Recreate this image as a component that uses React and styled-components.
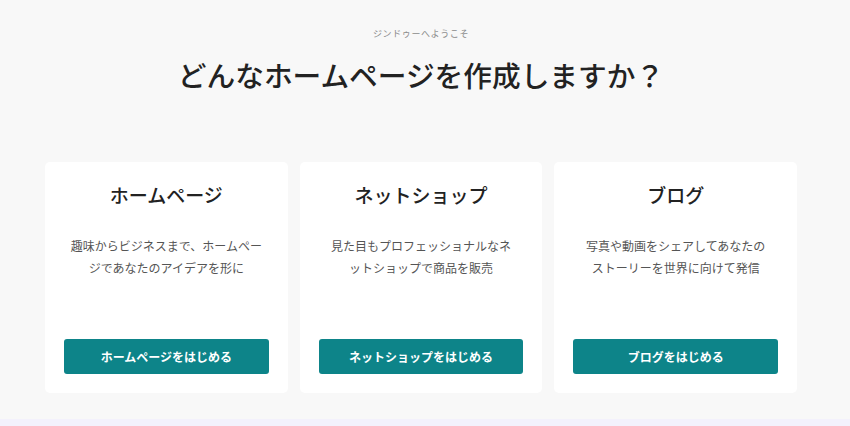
import React from "react";
import styled, { createGlobalStyle } from "styled-components";

const GlobalStyle = createGlobalStyle`
    html, body {
        margin: 0;
        padding: 0;
        background-color: #f8f8f8;
    }
    body {
        font-family: "Noto Sans CJK JP", "Noto Sans", sans-serif;
        color: #222;
    }
`;

const Page = styled.div`
    height: 426px;
    box-sizing: border-box;
    display: flex;
    flex-direction: column;
    align-items: center;
    padding: 26px 53px 0 45px;
    border-bottom: 7px solid #f3f1fc;
`;

const Welcome = styled.p`
    margin: 0;
    font-size: 9px;
    line-height: 16px;
    color: #8c8c8c;
    letter-spacing: 0.6px;
`;

const Title = styled.h1`
    margin: 13px 0 0;
    font-size: 28.7px;
    line-height: 40px;
    font-weight: 500;
    color: #222;
`;

const Cards = styled.div`
    margin-top: 67px;
    width: 100%;
    display: grid;
    grid-template-columns: repeat(3, 1fr);
    gap: 12px;
`;

const Card = styled.div`
    background-color: #fff;
    border-radius: 5px;
    height: 231px;
    box-sizing: border-box;
    padding: 19px;
    display: flex;
    flex-direction: column;
    align-items: center;
`;

const CardTitle = styled.h2`
    margin: 0;
    font-size: 19px;
    line-height: 28px;
    font-weight: 500;
    color: #222;
`;

const Description = styled.p`
    margin: 26px 0 0;
    font-size: 12px;
    line-height: 22px;
    color: #555;
    text-align: center;
    flex: 1;
`;

const Button = styled.button`
    width: 100%;
    height: 35px;
    border: none;
    border-radius: 3px;
    background-color: #0d8489;
    color: #fff;
    font-family: inherit;
    font-size: 12px;
    font-weight: 700;
    cursor: pointer;
`;

const plans = [
    {
        title: "ホームページ",
        lines: ["趣味からビジネスまで、ホームペー", "ジであなたのアイデアを形に"],
        action: "ホームページをはじめる",
    },
    {
        title: "ネットショップ",
        lines: ["見た目もプロフェッショナルなネ", "ットショップで商品を販売"],
        action: "ネットショップをはじめる",
    },
    {
        title: "ブログ",
        lines: ["写真や動画をシェアしてあなたの", "ストーリーを世界に向けて発信"],
        action: "ブログをはじめる",
    },
];

const App = () => {
    return (
        <>
            <GlobalStyle />
            <Page>
                <Welcome>ジンドゥーへようこそ</Welcome>
                <Title>どんなホームページを作成しますか？</Title>
                <Cards>
                    {plans.map((plan) => (
                        <Card key={plan.title}>
                            <CardTitle>{plan.title}</CardTitle>
                            <Description>
                                {plan.lines[0]}
                                <br />
                                {plan.lines[1]}
                            </Description>
                            <Button type="button">{plan.action}</Button>
                        </Card>
                    ))}
                </Cards>
            </Page>
        </>
    );
};
export default App;
